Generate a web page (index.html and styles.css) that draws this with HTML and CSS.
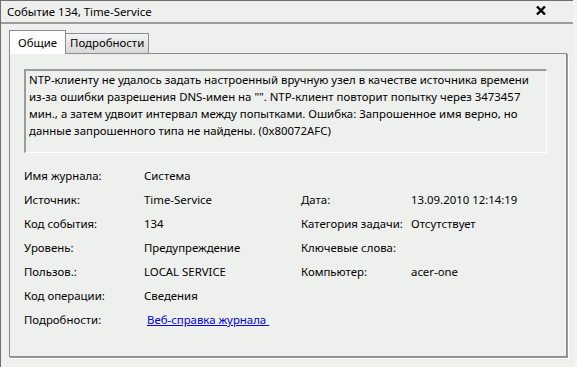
FILE: index.html
```html
<!DOCTYPE html>
<html lang="ru">
<head>
<meta charset="utf-8">
<link rel="stylesheet" href="styles.css">
</head>
<body>
<div class="window">
  <div class="titlebar">
    <span class="title">Событие 134, Time-Service</span>
    <span class="close"><svg width="10" height="9" viewBox="0 0 10 9"><path d="M1 0.5 L9 8.5 M9 0.5 L1 8.5" stroke="#000" stroke-width="2.4"/></svg></span>
  </div>
  <div class="body">
    <div class="tabs">
      <div class="tab active">Общие</div>
      <div class="tab">Подробности</div>
    </div>
    <div class="panel">
      <div class="message">NTP-клиенту не удалось задать настроенный вручную узел в качестве источника времени из-за ошибки разрешения DNS-имен на "". NTP-клиент повторит попытку через 3473457 мин., а затем удвоит интервал между попытками. Ошибка: Запрошенное имя верно, но данные запрошенного типа не найдены. (0x80072AFC)</div>
      <div class="fields">
        <div class="col left">
          <div class="row"><span class="lbl">Имя журнала:</span><span class="val">Система</span></div>
          <div class="row"><span class="lbl">Источник:</span><span class="val">Time-Service</span></div>
          <div class="row"><span class="lbl">Код события:</span><span class="val">134</span></div>
          <div class="row"><span class="lbl">Уровень:</span><span class="val">Предупреждение</span></div>
          <div class="row"><span class="lbl">Пользов.:</span><span class="val">LOCAL SERVICE</span></div>
          <div class="row"><span class="lbl">Код операции:</span><span class="val">Сведения</span></div>
          <div class="row"><span class="lbl">Подробности:</span><span class="val"><a class="link" href="#">Веб-справка журнала&nbsp;</a></span></div>
        </div>
        <div class="col right">
          <div class="row"></div>
          <div class="row"><span class="lbl2">Дата:</span><span class="val">13.09.2010 12:14:19</span></div>
          <div class="row"><span class="lbl2">Категория задачи:</span><span class="val">Отсутствует</span></div>
          <div class="row"><span class="lbl2">Ключевые слова:</span><span class="val"></span></div>
          <div class="row"><span class="lbl2">Компьютер:</span><span class="val">acer-one</span></div>
        </div>
      </div>
    </div>
  </div>
</div>
</body>
</html>
```
FILE: styles.css
```css
html, body {
  margin: 0;
  padding: 0;
  background: #f3f3f3;
}
body {
  font-family: "Noto Sans", "Open Sans", sans-serif;
  font-size: 11.4px;
  color: #000;
  width: 577px;
  height: 367px;
  overflow: hidden;
}
.window {
  width: 572px;
  height: 366px;
  background: #eef0ed;
  border-top: 1px solid #6f6f6f;
  border-left: 1px solid #6f6f6f;
}
.titlebar {
  height: 21px;
  border-bottom: 2px solid #9d9d9d;
  display: flex;
  align-items: center;
  justify-content: space-between;
  padding: 0 27px 0 6px;
}
.title {
  line-height: 16px;
}
.close {
  display: flex;
  margin-top: -2px;
}
.body {
  padding: 6px 0 0 8px;
}
.tabs {
  display: flex;
  align-items: flex-end;
  height: 23px;
  position: relative;
  z-index: 1;
}
.tab {
  border: 1px solid #898c95;
  border-bottom: none;
  height: 19px;
  line-height: 18px;
  padding: 0 4px;
  background: linear-gradient(#f3f3f3, #d8d8d8);
  margin-left: -1px;
}
.tab.active {
  background: #fff;
  height: 23px;
  line-height: 23px;
  padding: 0 8px 0 8px;
  margin-left: 0;
  margin-bottom: -1px;
}
.panel {
  border: 1px solid #898c95;
  box-shadow: 1px 1px 0 #9a9a9a, 2px 2px 0 #fff;
  padding: 15px 0 0 14px;
  box-sizing: border-box;
  width: 558px;
  height: 304px;
}
.message {
  width: 523px;
  height: 84px;
  box-sizing: border-box;
  border-top: 2px solid #9c9c9c;
  border-left: 2px solid #9c9c9c;
  border-right: 1px solid #fff;
  border-bottom: 1px solid #fff;
  padding: 0 8px 0 3px;
  line-height: 17px;
}
.fields {
  display: flex;
  margin-top: 11px;
}
.row {
  height: 24px;
  line-height: 24px;
  display: flex;
}
.col.left {
  width: 277px;
}
.lbl {
  width: 120px;
  flex: none;
}
.lbl2 {
  width: 110px;
  flex: none;
}
.link {
  color: #0000ee;
  text-decoration: underline;
  margin-left: 3px;
}
```
